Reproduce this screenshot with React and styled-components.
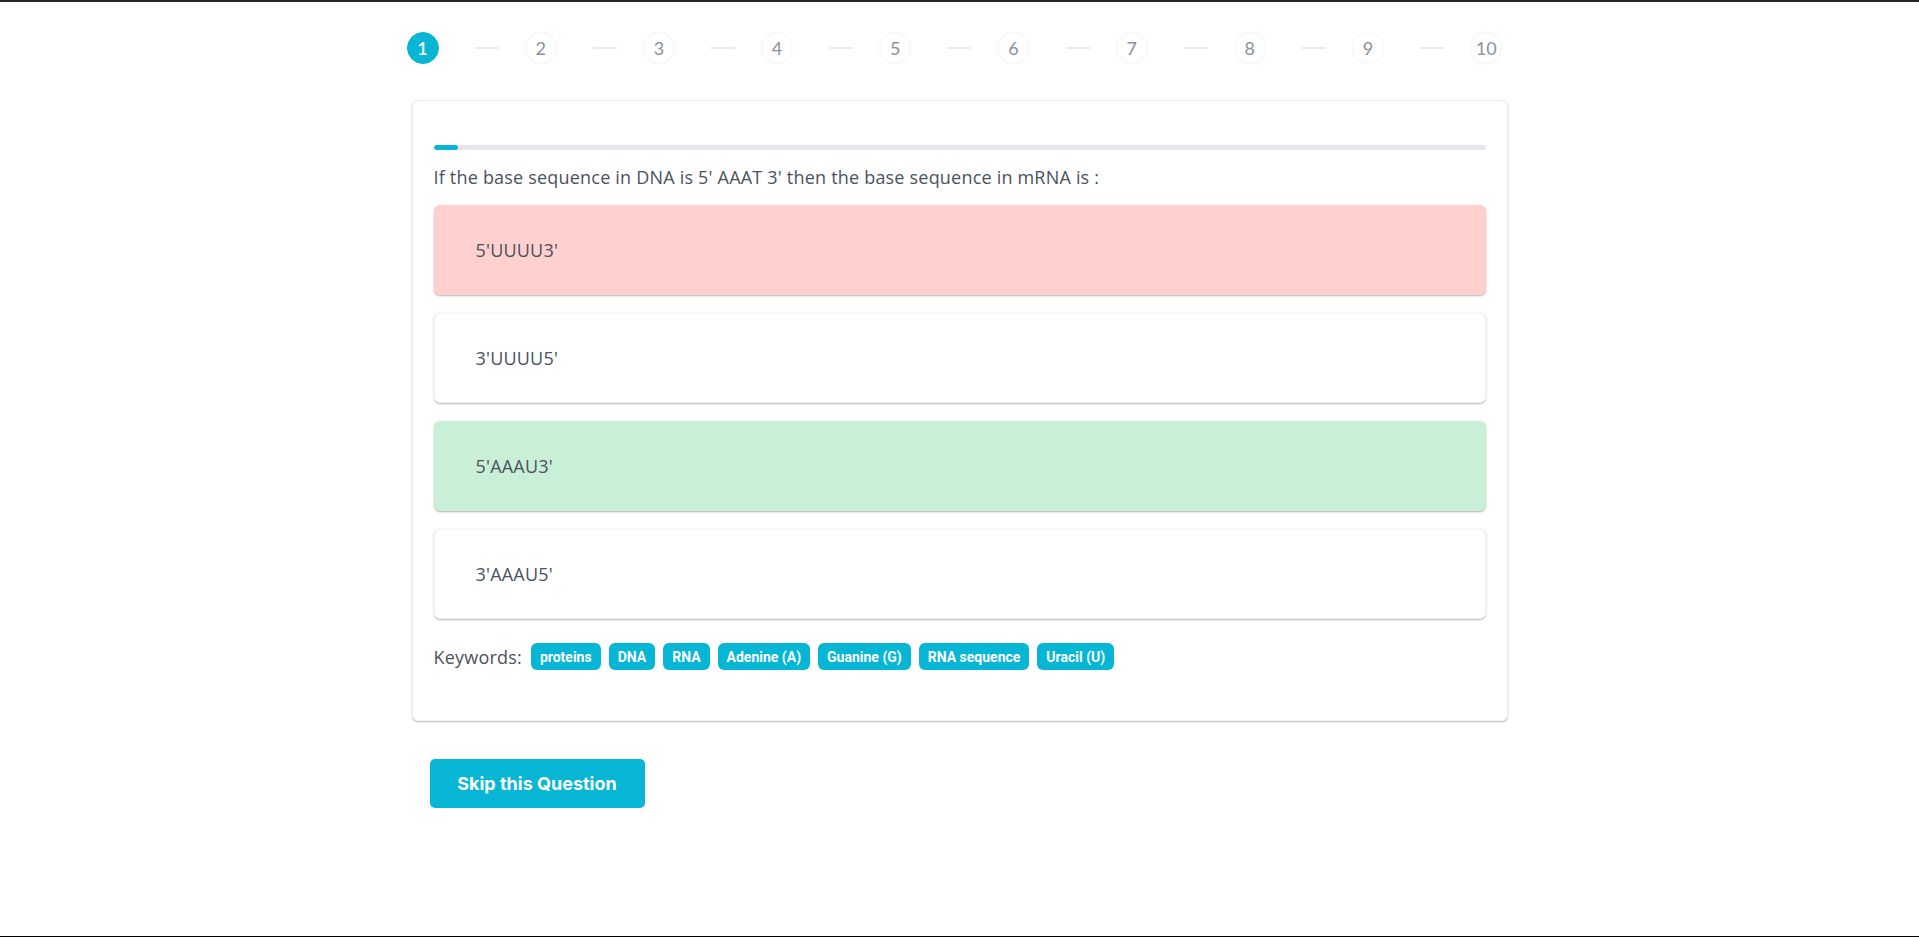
import React from "react";
import styled, { createGlobalStyle } from "styled-components";

const GlobalStyle = createGlobalStyle`
  html, body { margin: 0; padding: 0; background: #ffffff; }
  * { box-sizing: border-box; }
`;

const Page = styled.div`
  min-height: 100vh;
  border-top: 2px solid #262626;
  border-bottom: 1px solid #000;
  font-family: "Open Sans", "Noto Sans", sans-serif;
  color: #4a5260;
`;

const Container = styled.div`
  width: 1096px;
  margin: 0 auto;
  padding-top: 30px;
`;

const Stepper = styled.div`
  display: flex;
  align-items: center;
  margin-left: -5px;
  height: 32px;
`;

const StepCircle = styled.div`
  width: 32px;
  height: 32px;
  border-radius: 50%;
  display: flex;
  align-items: center;
  justify-content: center;
  flex-shrink: 0;
  font-family: Lato, sans-serif;
  font-size: 18px;
  font-weight: ${(p) => (p.$active ? 600 : 400)};
  background: ${(p) => (p.$active ? "#06b6d4" : "#ffffff")};
  color: ${(p) => (p.$active ? "#ffffff" : "#8a9299")};
  border: 1.5px solid ${(p) => (p.$active ? "#06b6d4" : "#f1f3f5")};
`;

const Connector = styled.div`
  width: 24px;
  height: 2px;
  background: #e9ecef;
  margin: 0 26px 0 36.2px;
  flex-shrink: 0;
`;

const Card = styled.div`
  margin-top: 36px;
  background: #fff;
  border: 1px solid #f1f1f1;
  border-radius: 6px;
  box-shadow: 0 1px 2px rgba(0, 0, 0, 0.28);
  padding: 44px 21px 50px;
`;

const Progress = styled.div`
  height: 5px;
  border-radius: 3px;
  background: #e5e7eb;
  overflow: hidden;
`;

const ProgressFill = styled.div`
  height: 100%;
  background: #06b6d4;
  border-radius: 3px;
`;

const Question = styled.p`
  margin: 15px 0 16px;
  font-size: 18px;
  letter-spacing: 0.2px;
  line-height: 24px;
  color: #4a5260;
`;

const Options = styled.div`
  display: flex;
  flex-direction: column;
  gap: 18px;
`;

const Option = styled.div`
  height: 90px;
  display: flex;
  align-items: center;
  padding-left: 41px;
  border-radius: 6px;
  font-size: 18px;
  letter-spacing: 0.2px;
  color: #4a5260;
  background: ${(p) =>
    p.$state === "wrong" ? "#ffd0cd" : p.$state === "right" ? "#c9efd7" : "#ffffff"};
  border: 1px solid
    ${(p) => (p.$state === "wrong" ? "#ffd0cd" : p.$state === "right" ? "#c9efd7" : "#f3f3f3")};
  box-shadow: 0 1px 2px rgba(0, 0, 0, 0.3);
`;

const KeywordRow = styled.div`
  margin-top: 24px;
  display: flex;
  align-items: center;
  gap: 8px;
`;

const KeywordLabel = styled.span`
  font-size: 18px;
  letter-spacing: 0.2px;
  color: #4a5260;
  margin-right: 1px;
`;

const Tag = styled.span`
  height: 27px;
  display: inline-flex;
  align-items: center;
  padding: 0 9px;
  border-radius: 6px;
  background: #06b6d4;
  color: #fff;
  font-family: "Roboto", sans-serif;
  font-weight: 700;
  font-size: 14px;
`;

const SkipButton = styled.button`
  margin: 38px 0 0 18px;
  width: 215px;
  height: 49px;
  border: none;
  border-radius: 5px;
  background: #06b6d4;
  color: #fff;
  font-family: Inter, sans-serif;
  font-weight: 700;
  font-size: 18px;
  cursor: pointer;
`;

const steps = [1, 2, 3, 4, 5, 6, 7, 8, 9, 10];
const options = [
  { text: "5'UUUU3'", state: "wrong" },
  { text: "3'UUUU5'", state: "none" },
  { text: "5'AAAU3'", state: "right" },
  { text: "3'AAAU5'", state: "none" },
];
const keywords = ["proteins", "DNA", "RNA", "Adenine (A)", "Guanine (G)", "RNA sequence", "Uracil (U)"];

export default function App() {
  return (
    <>
      <GlobalStyle />
      <Page>
        <Container>
          <Stepper>
            {steps.map((s, i) => (
              <React.Fragment key={s}>
                {i > 0 && <Connector />}
                <StepCircle $active={s === 1}>{s}</StepCircle>
              </React.Fragment>
            ))}
          </Stepper>
          <Card>
            <Progress>
              <ProgressFill style={{ width: "2.3%" }} />
            </Progress>
            <Question>
              If the base sequence in DNA is 5' AAAT 3' then the base sequence in mRNA is :
            </Question>
            <Options>
              {options.map((o) => (
                <Option key={o.text} $state={o.state}>
                  {o.text}
                </Option>
              ))}
            </Options>
            <KeywordRow>
              <KeywordLabel>Keywords:</KeywordLabel>
              {keywords.map((k) => (
                <Tag key={k}>{k}</Tag>
              ))}
            </KeywordRow>
          </Card>
          <SkipButton>Skip this Question</SkipButton>
        </Container>
      </Page>
    </>
  );
}
